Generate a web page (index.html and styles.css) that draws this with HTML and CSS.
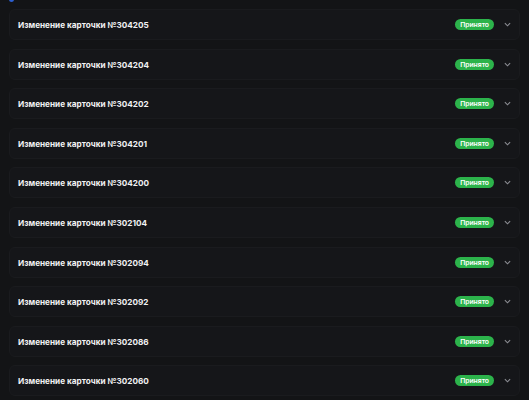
FILE: index.html
```html
<!DOCTYPE html>
<html lang="ru">
<head>
<meta charset="utf-8">
<link rel="stylesheet" href="styles.css">
</head>
<body>
<div class="top-dot"></div>
<ul class="list">
  <li class="card"><span class="title">Изменение карточки №304205</span><span class="badge">Принято</span><svg class="chev" viewBox="0 0 8 5"><path d="M1 1l3 3 3-3"/></svg></li>
  <li class="card"><span class="title">Изменение карточки №304204</span><span class="badge">Принято</span><svg class="chev" viewBox="0 0 8 5"><path d="M1 1l3 3 3-3"/></svg></li>
  <li class="card"><span class="title">Изменение карточки №304202</span><span class="badge">Принято</span><svg class="chev" viewBox="0 0 8 5"><path d="M1 1l3 3 3-3"/></svg></li>
  <li class="card"><span class="title">Изменение карточки №304201</span><span class="badge">Принято</span><svg class="chev" viewBox="0 0 8 5"><path d="M1 1l3 3 3-3"/></svg></li>
  <li class="card"><span class="title">Изменение карточки №304200</span><span class="badge">Принято</span><svg class="chev" viewBox="0 0 8 5"><path d="M1 1l3 3 3-3"/></svg></li>
  <li class="card"><span class="title">Изменение карточки №302104</span><span class="badge">Принято</span><svg class="chev" viewBox="0 0 8 5"><path d="M1 1l3 3 3-3"/></svg></li>
  <li class="card"><span class="title">Изменение карточки №302094</span><span class="badge">Принято</span><svg class="chev" viewBox="0 0 8 5"><path d="M1 1l3 3 3-3"/></svg></li>
  <li class="card"><span class="title">Изменение карточки №302092</span><span class="badge">Принято</span><svg class="chev" viewBox="0 0 8 5"><path d="M1 1l3 3 3-3"/></svg></li>
  <li class="card"><span class="title">Изменение карточки №302086</span><span class="badge">Принято</span><svg class="chev" viewBox="0 0 8 5"><path d="M1 1l3 3 3-3"/></svg></li>
  <li class="card"><span class="title">Изменение карточки №302060</span><span class="badge">Принято</span><svg class="chev" viewBox="0 0 8 5"><path d="M1 1l3 3 3-3"/></svg></li>
</ul>
</body>
</html>
```

FILE: styles.css
```css
html, body {
  margin: 0;
  padding: 0;
  background: #131416;
  height: 100%;
  overflow: hidden;
}
body {
  font-family: Inter, "Noto Sans", sans-serif;
  position: relative;
}
.top-dot {
  position: absolute;
  left: 9px;
  top: -3px;
  width: 5px;
  height: 5px;
  border-radius: 50%;
  background: #2d5fd0;
}
.list {
  list-style: none;
  margin: 0;
  padding: 9px 9px 0 9px;
  display: flex;
  flex-direction: column;
  gap: 8.6px;
}
.card {
  height: 31px;
  box-sizing: border-box;
  display: flex;
  align-items: center;
  padding: 0 8px 0 8px;
  background: #151619;
  border: 1px solid #1a1b1e;
  border-radius: 6px;
}
.title {
  flex: 1;
  color: #f1f1f3;
  font-size: 8.2px;
  font-weight: 700;
  padding-top: 1px;
}
.badge {
  background: #2cb34b;
  color: #ffffff;
  font-size: 6.8px;
  font-weight: 600;
  height: 11px;
  line-height: 11px;
  padding: 0 5px;
  border-radius: 6px;
  margin-right: 10px;
}
.chev {
  width: 7px;
  height: 5px;
  fill: none;
  stroke: #8a8c92;
  stroke-width: 1.3;
}
```
